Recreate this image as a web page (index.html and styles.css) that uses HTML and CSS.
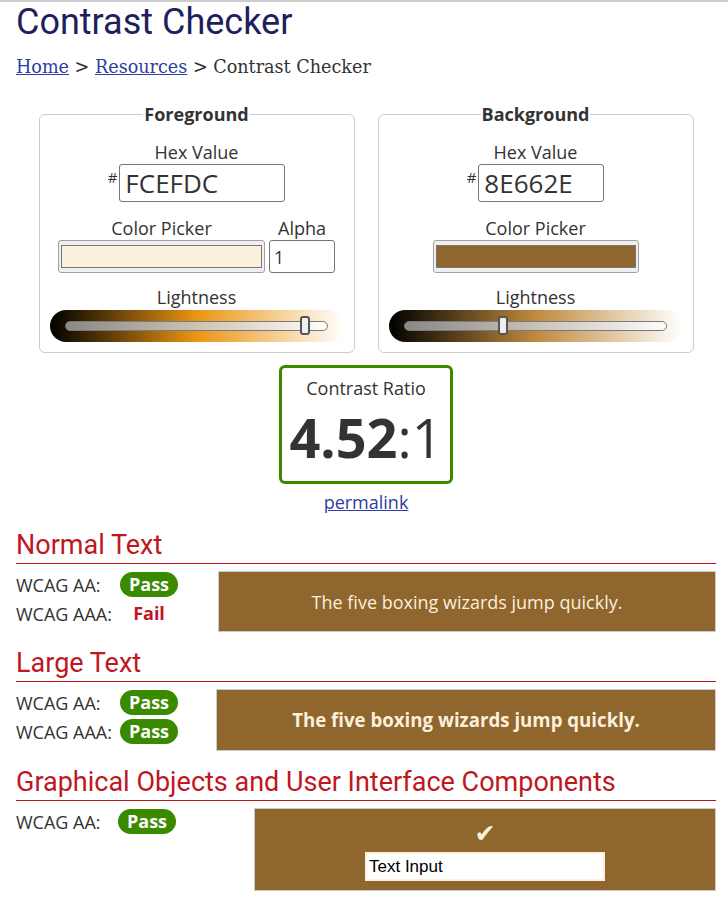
FILE: index.html
```html
<!DOCTYPE html>
<html lang="en">
<head>
  <meta charset="UTF-8" />
  <meta name="viewport" content="width=device-width, initial-scale=1.0"/>
  <title>Contrast Checker</title>
  <link rel="stylesheet" href="styles.css">
</head>
<body>
  <div class="page">
    <h1 class="page-title">Contrast Checker</h1>
    <p class="breadcrumb"><a href="#">Home</a> &gt; <a href="#">Resources</a> &gt; Contrast Checker</p>

    <!-- Color pickers -->
    <div class="pickers">
      <fieldset class="picker">
        <legend>Foreground</legend>
        <div class="field-label">Hex Value</div>
        <div class="hex-row">
          <span class="hash">#</span>
          <input type="text" class="hex-input hex-fg" value="FCEFDC">
        </div>
        <div class="color-row">
          <div class="color-col">
            <label class="field-label">Color Picker</label>
            <input type="color" class="color-input" value="#fcefdc">
          </div>
          <div class="color-col">
            <label class="field-label">Alpha</label>
            <input type="text" class="alpha-input" value="1">
          </div>
        </div>
        <div class="field-label label-light">Lightness</div>
        <div class="lightness lightness-fg">
          <input type="range" min="0" max="100" step="0.1" value="93.3">
        </div>
      </fieldset>

      <fieldset class="picker">
        <legend>Background</legend>
        <div class="field-label">Hex Value</div>
        <div class="hex-row">
          <span class="hash">#</span>
          <input type="text" class="hex-input hex-bg" value="8E662E">
        </div>
        <div class="color-row">
          <div class="color-col">
            <label class="field-label">Color Picker</label>
            <input type="color" class="color-input color-input-bg" value="#8e662e">
          </div>
        </div>
        <div class="field-label label-light">Lightness</div>
        <div class="lightness lightness-bg">
          <input type="range" min="0" max="100" step="0.1" value="36.9">
        </div>
      </fieldset>
    </div>

    <!-- Ratio -->
    <div class="ratio-box">
      <div class="ratio-label">Contrast Ratio</div>
      <div class="ratio-value"><b>4.52</b>:1</div>
    </div>
    <div class="permalink"><a href="#">permalink</a></div>

    <!-- Results -->
    <section class="result">
      <h2 class="result-title">Normal Text</h2>
      <div class="result-row">
        <div class="result-labels">
          <span>WCAG AA:</span><span class="badge pass">Pass</span>
          <span>WCAG AAA:</span><span class="badge fail">Fail</span>
        </div>
        <div class="sample sample-normal">The five boxing wizards jump quickly.</div>
      </div>
    </section>

    <section class="result">
      <h2 class="result-title">Large Text</h2>
      <div class="result-row">
        <div class="result-labels labels-large">
          <span>WCAG AA:</span><span class="badge pass">Pass</span>
          <span>WCAG AAA:</span><span class="badge pass">Pass</span>
        </div>
        <div class="sample sample-large">The five boxing wizards jump quickly.</div>
      </div>
    </section>

    <section class="result">
      <h2 class="result-title">Graphical Objects and User Interface Components</h2>
      <div class="result-row">
        <div class="result-labels labels-graphic">
          <span>WCAG AA:</span><span class="badge pass">Pass</span>
        </div>
        <div class="sample sample-graphic">
          <span class="check">&#10004;</span>
          <input type="text" class="demo-input" value="Text Input">
        </div>
      </div>
    </section>
  </div>
</body>
</html>
```

FILE: styles.css
```css
* {
  box-sizing: border-box;
}

body {
  margin: 0;
  border-top: 2px solid #cccccc;
  background-color: #fff;
  color: #333;
  font-family: 'Open Sans', sans-serif;
  font-size: 18px;
  line-height: 24px;
}

.page {
  padding: 0 12px 0 16px;
}

a {
  color: #2c3e9f;
}

.page-title {
  margin: 0;
  font-family: Roboto, sans-serif;
  font-weight: 400;
  font-size: 36px;
  line-height: 40px;
  color: #1e1f5c;
}

.breadcrumb {
  margin: 13px 0 0;
  font-family: 'DejaVu Serif', serif;
  font-size: 17.6px;
  line-height: 24px;
  color: #333;
}

/* pickers */
.pickers {
  display: flex;
  justify-content: center;
  gap: 23px;
  margin-top: 23px;
}

.picker {
  width: 316px;
  margin: 0;
  padding: 14px 10px 10px;
  border: 1px solid #cccccc;
  border-radius: 6px;
  text-align: center;
}

.picker legend {
  margin: 0 auto;
  padding: 0 1px;
  font-weight: 700;
  line-height: 24px;
}

.field-label {
  display: block;
  line-height: 24px;
}

.label-light {
  margin-top: 12px;
}

.hex-row {
  display: flex;
  justify-content: center;
  align-items: flex-start;
  gap: 2px;
}

.hash {
  font-size: 15px;
  line-height: 15px;
  margin-top: 6px;
}

.hex-input {
  height: 38px;
  padding: 0 5px;
  border: 1px solid #767676;
  border-radius: 3px;
  font-family: 'Open Sans', sans-serif;
  font-size: 26px;
  color: #333;
}

.hex-fg {
  width: 166px;
}

.hex-bg {
  width: 126px;
}

.color-row {
  display: flex;
  justify-content: center;
  gap: 4px;
  margin-top: 14px;
}

.color-col {
  display: flex;
  flex-direction: column;
  align-items: center;
}

.color-input {
  width: 207px;
  height: 33px;
  padding: 0;
  border: 1px solid #a0a0a0;
  border-radius: 3px;
  background-color: #efefef;
  cursor: pointer;
}

.color-input-bg {
  width: 206px;
}

.color-input::-webkit-color-swatch-wrapper {
  padding: 4px 2px;
}

.color-input::-webkit-color-swatch {
  border: 1px solid #777;
  border-radius: 0;
}

.alpha-input {
  width: 66px;
  height: 33px;
  padding: 0 4px;
  border: 1px solid #767676;
  border-radius: 3px;
  font-family: 'Open Sans', sans-serif;
  font-size: 17.6px;
  color: #333;
}

.lightness {
  display: flex;
  justify-content: center;
  align-items: center;
  height: 32px;
  margin-top: 1px;
  border-radius: 16px;
}

.lightness-fg {
  background: linear-gradient(to right, #000 0%, #eb9514 50%, #fff 100%);
}

.lightness-bg {
  background: linear-gradient(to right, #000 0%, #c18a3e 50%, #fff 100%);
}

.lightness input[type="range"] {
  -webkit-appearance: none;
  appearance: none;
  width: 263px;
  height: 20px;
  margin: 0;
  background: transparent;
}

.lightness input[type="range"]::-webkit-slider-runnable-track {
  height: 10px;
  border: 1px solid #7a7a7a;
  border-radius: 5px;
  background: linear-gradient(to right, rgba(150, 150, 150, 0.9), rgba(255, 255, 255, 0.85));
}

.lightness input[type="range"]::-webkit-slider-thumb {
  -webkit-appearance: none;
  width: 10px;
  height: 19px;
  margin-top: -6px;
  border: 2px solid #555;
  border-radius: 3px;
  background: #eeeeee;
}

/* ratio */
.ratio-box {
  width: 174px;
  margin: 12px auto 0;
  padding: 8px 0 17px;
  border: 3px solid #3a8a00;
  border-radius: 6px;
  text-align: center;
}

.ratio-value {
  margin-top: 10px;
  font-size: 54px;
  line-height: 54px;
  color: #333;
}

.permalink {
  margin-top: 6px;
  text-align: center;
}

/* results */
.result {
  margin-top: 16px;
}

.result-title {
  margin: 0;
  padding-bottom: 3px;
  border-bottom: 1px solid #c0171f;
  font-family: Roboto, sans-serif;
  font-weight: 400;
  font-size: 27px;
  line-height: 30px;
  color: #c0171f;
}

.result-row {
  display: flex;
  align-items: flex-start;
  margin-top: 7px;
}

.result-labels {
  flex: 0 0 202px;
  display: grid;
  grid-template-columns: 104px 58px;
  row-gap: 4px;
  align-items: center;
  padding-top: 1px;
}

.labels-large {
  flex-basis: 200px;
}

.labels-graphic {
  flex-basis: 238px;
  grid-template-columns: 102px 58px;
}

.badge {
  height: 25px;
  line-height: 25px;
  text-align: center;
  font-weight: 700;
}

.pass {
  border-radius: 13px;
  background-color: #3a8a00;
  color: #fff;
}

.fail {
  color: #c0171f;
}

.sample {
  flex: 1;
  display: flex;
  align-items: center;
  justify-content: center;
  border: 1px solid #cccccc;
  background-color: #8e662e;
  color: #fcefdc;
}

.sample-normal {
  height: 61px;
}

.sample-large {
  height: 62px;
  font-size: 18.66px;
  font-weight: 700;
}

.sample-graphic {
  flex-direction: column;
  justify-content: flex-start;
  gap: 2px;
  padding: 9px 0;
}

.check {
  font-family: 'DejaVu Sans', sans-serif;
  font-size: 25px;
  line-height: 32px;
}

.demo-input {
  width: 240px;
  height: 29px;
  padding: 0 2px;
  border: 2px solid #fcefdc;
  background-color: #fff;
  font-family: 'Liberation Sans', Arial, sans-serif;
  font-size: 17px;
  color: #000;
}
```
